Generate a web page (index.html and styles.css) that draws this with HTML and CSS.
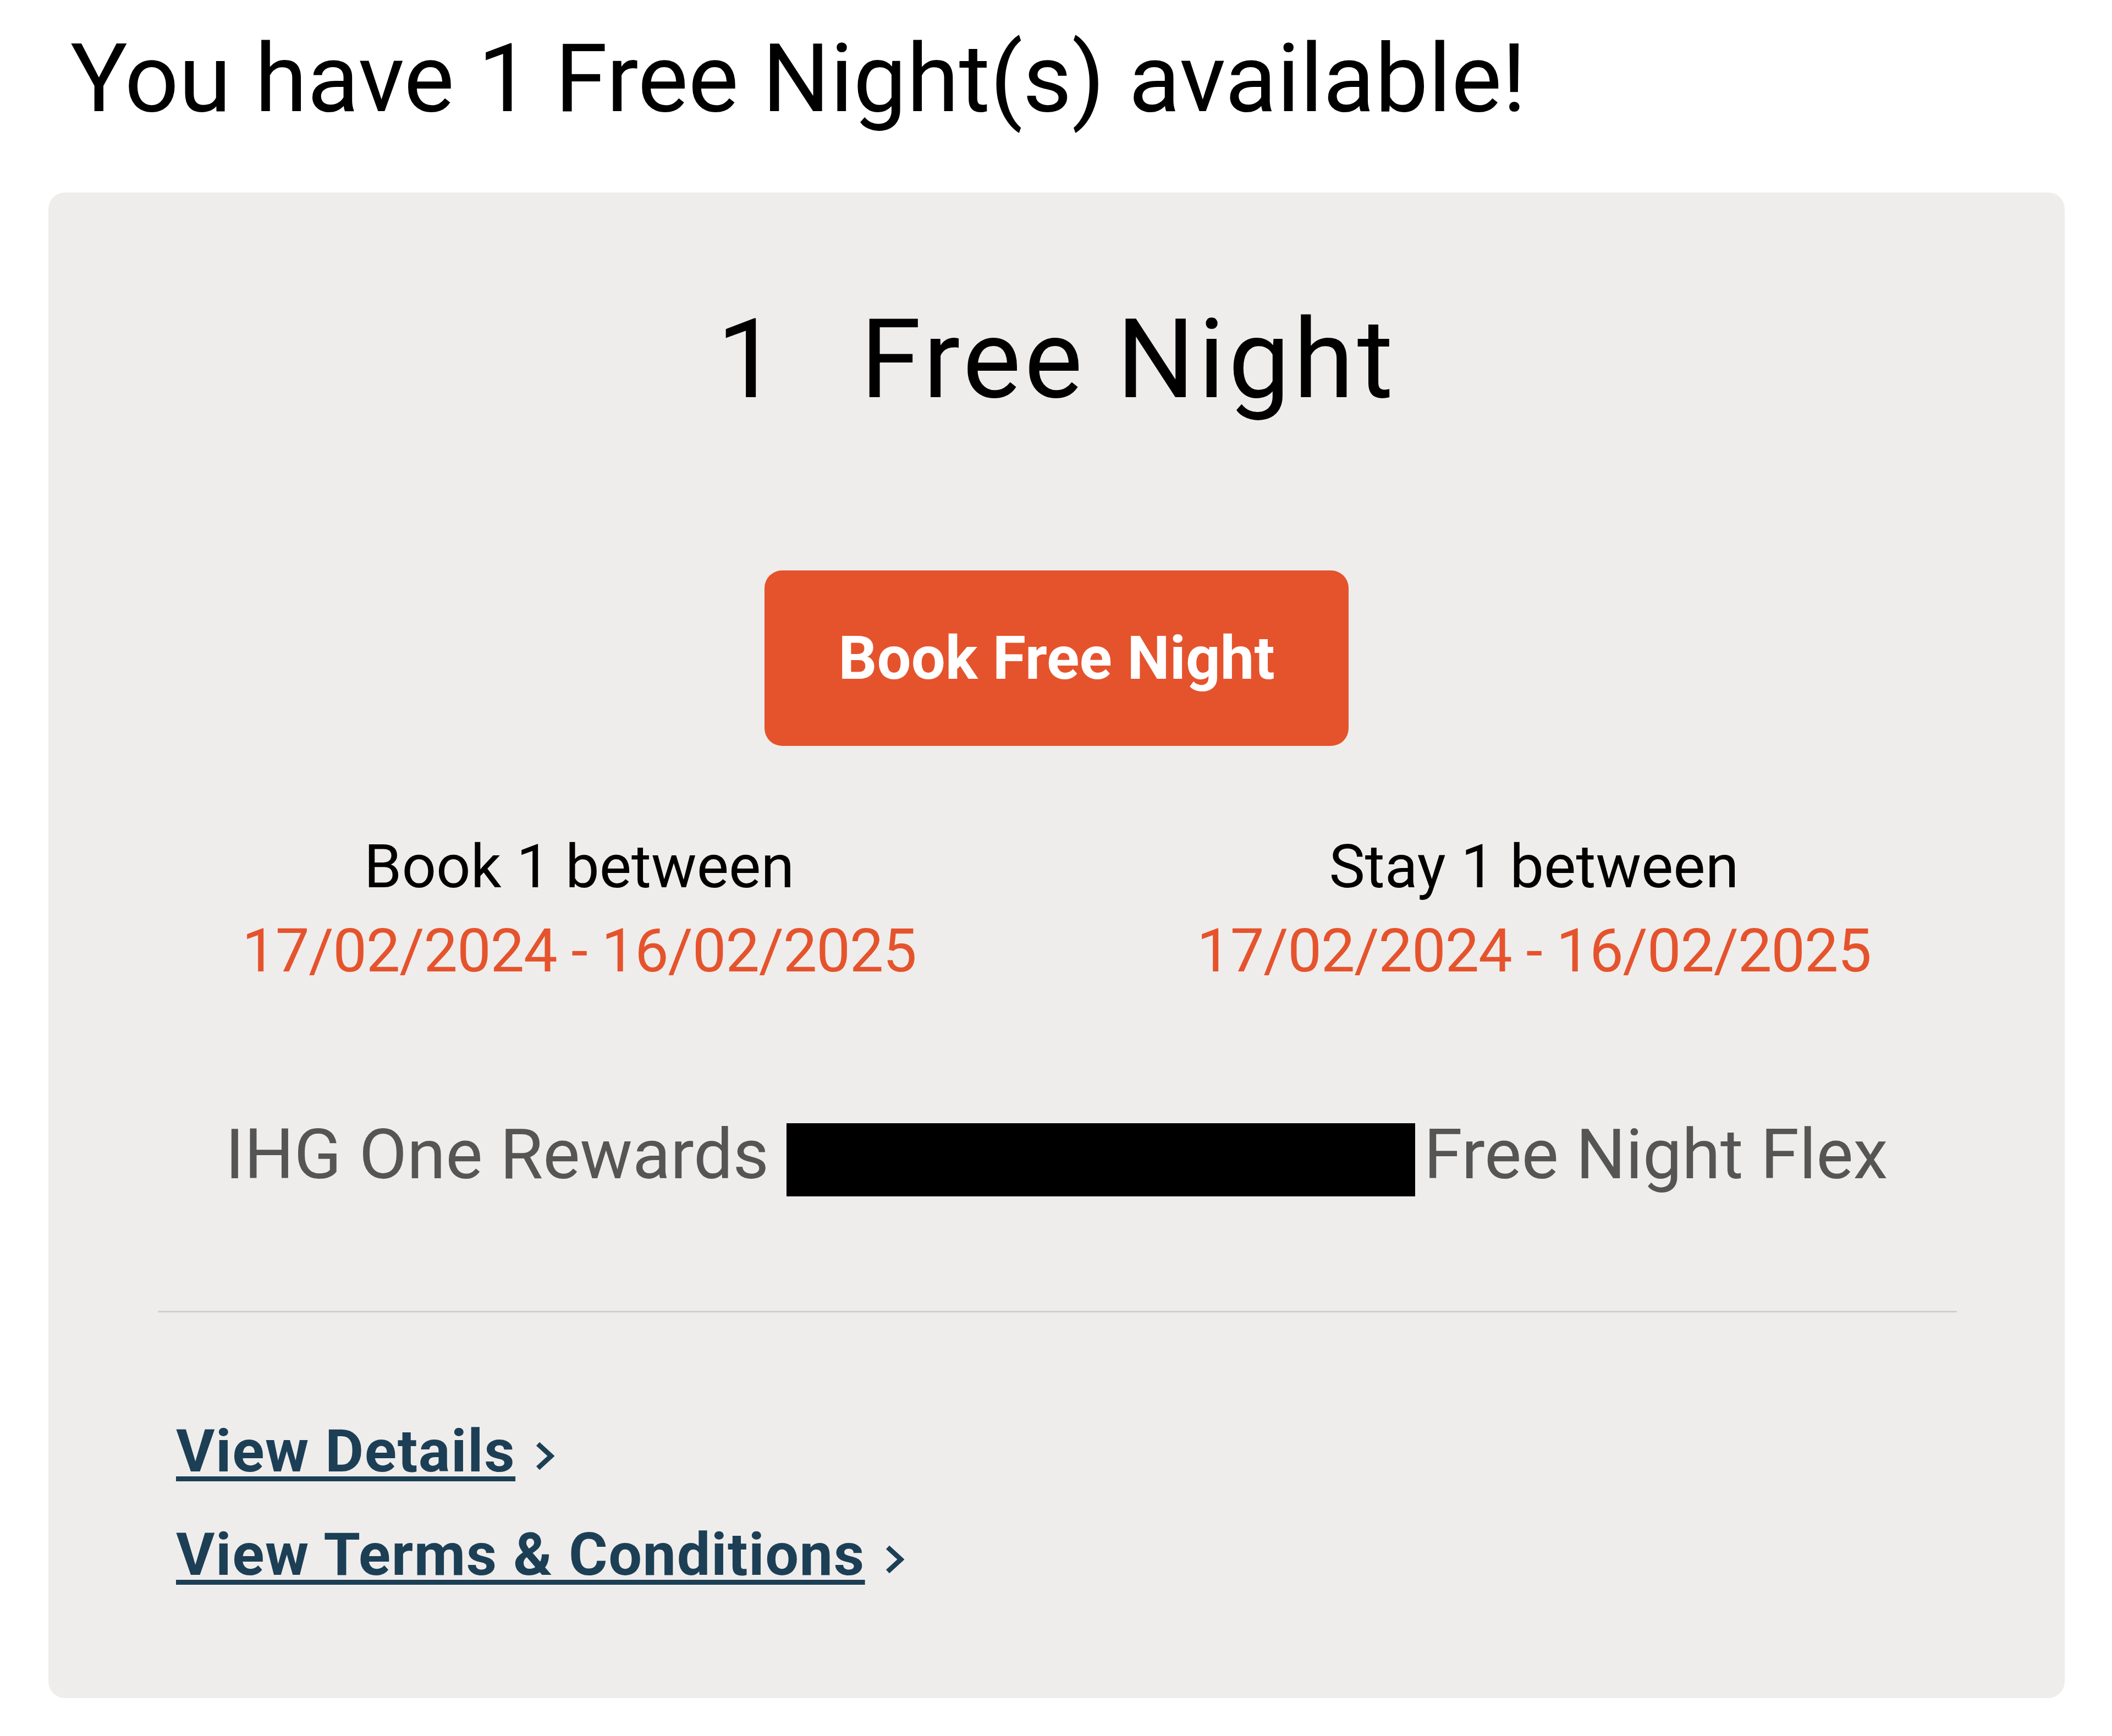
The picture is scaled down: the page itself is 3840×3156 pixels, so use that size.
FILE: index.html
```html
<!DOCTYPE html>
<html lang="en">
<head>
    <meta charset="UTF-8">
    <meta name="viewport" content="width=device-width, initial-scale=1.0">
    <title>Free Nights</title>
    <link rel="stylesheet" href="styles.css">
</head>
<body>
    <h1 class="heading">You have 1 Free Night(s) available!</h1>
    <div class="card">
        <div class="card-title">
            <span class="count">1</span>
            <span>Free Night</span>
        </div>
        <div class="actions">
            <button class="btn">Book Free Night</button>
        </div>
        <div class="validity">
            <div class="period">
                <div class="label">Book 1 between</div>
                <div class="dates">17/02/2024 - 16/02/2025</div>
            </div>
            <div class="period">
                <div class="label">Stay 1 between</div>
                <div class="dates">17/02/2024 - 16/02/2025</div>
            </div>
        </div>
        <div class="product">IHG One Rewards <span class="redact"></span>Free Night Flex</div>
        <div class="card-foot">
            <a class="link" href="#"><span>View Details</span>
                <svg class="chev" viewBox="0 0 36 56"><polyline points="6,6 30,28 6,50"/></svg>
            </a>
            <a class="link" href="#"><span>View Terms &amp; Conditions</span>
                <svg class="chev" viewBox="0 0 36 56"><polyline points="6,6 30,28 6,50"/></svg>
            </a>
        </div>
    </div>
</body>
</html>
```

FILE: styles.css
```css
body {
  margin: 0;
  background: #fff;
  font-family: Roboto, "Liberation Sans", sans-serif;
  color: #000;
  line-height: 1.2;
}
.heading {
  margin: 40px 0 102px;
  padding-left: 128px;
  font-size: 173px;
  font-weight: 400;
  line-height: 1.2;
}
.card {
  margin: 0 86px 0 88px;
  padding: 184px 0 196px;
  background: #efedeb;
  border-radius: 30px;
}
.card-title {
  display: flex;
  justify-content: center;
  gap: 143px;
  font-size: 200px;
  letter-spacing: 6px;
}
.actions {
  display: flex;
  justify-content: center;
  margin-top: 263px;
}
.btn {
  height: 319px;
  padding: 0 134px;
  border: 0;
  border-radius: 32px;
  background: #e5532d;
  color: #fff;
  font-family: inherit;
  font-size: 110px;
  font-weight: 700;
}
.validity {
  display: grid;
  grid-template-columns: 1fr 1fr;
  margin-top: 154px;
  padding: 0 97px;
  text-align: center;
  font-size: 110px;
}
.dates {
  margin-top: 21px;
  color: #e5532d;
  letter-spacing: -1.3px;
}
.product {
  margin-top: 228px;
  text-align: center;
  font-size: 127px;
  color: #555;
}
.redact {
  display: inline-block;
  width: 1143px;
  height: 133px;
  margin-right: 16px;
  vertical-align: -33px;
  background: #000;
}
.card-foot {
  margin: 208px 196px 0 199px;
  padding: 188px 0 0 33px;
  border-top: 3px solid #cfcfcf;
}
.link {
  display: flex;
  align-items: baseline;
  gap: 35px;
  font-size: 108px;
  font-weight: 700;
  letter-spacing: 1.5px;
  color: #1c3f56;
  text-decoration: none;
}
.link + .link {
  margin-top: 58px;
}
.link span {
  text-decoration: underline;
  text-decoration-thickness: 9px;
  text-underline-offset: 9px;
}
.chev {
  width: 36px;
  height: 56px;
  margin-bottom: -6px;
  fill: none;
  stroke: #1c3f56;
  stroke-width: 9;
}
```
